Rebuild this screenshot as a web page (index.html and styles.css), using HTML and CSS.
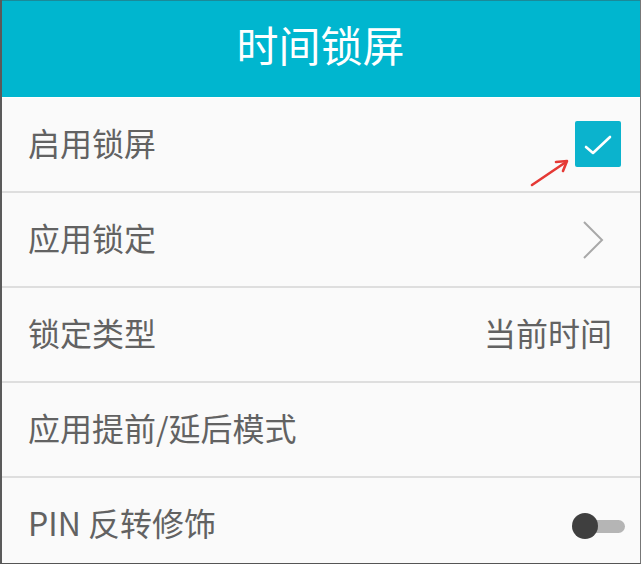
FILE: index.html
```html
<!DOCTYPE html>
<html lang="zh-CN">
<head>
    <meta charset="UTF-8">
    <meta name="viewport" content="width=device-width, initial-scale=1.0">
    <title>时间锁屏</title>
    <link rel="stylesheet" href="styles.css">
</head>
<body>
    <div class="screen">
        <div class="header">时间锁屏</div>
        <div class="list">
            <div class="row">
                <span class="label">启用锁屏</span>
                <span class="check">
                    <svg width="46" height="46" viewBox="0 0 46 46">
                        <polyline points="11,26 18,32 35,16" fill="none" stroke="#fff" stroke-width="2.6" stroke-linecap="round" stroke-linejoin="round"/>
                    </svg>
                </span>
                <svg class="arrow" width="44" height="32" viewBox="0 0 44 32">
                    <line x1="3" y1="28" x2="37" y2="5" stroke="#e53935" stroke-width="2.6" stroke-linecap="round"/>
                    <polyline points="27,5 38,4 34,14" fill="none" stroke="#e53935" stroke-width="2.6" stroke-linecap="round" stroke-linejoin="round"/>
                </svg>
            </div>
            <div class="row">
                <span class="label">应用锁定</span>
                <svg class="chevron" width="22" height="40" viewBox="0 0 22 40">
                    <polyline points="2,2 20,20 2,38" fill="none" stroke="#a8a8a8" stroke-width="2"/>
                </svg>
            </div>
            <div class="row">
                <span class="label">锁定类型</span>
                <span class="value">当前时间</span>
            </div>
            <div class="row">
                <span class="label">应用提前/延后模式</span>
            </div>
            <div class="row last">
                <span class="label">PIN 反转修饰</span>
                <span class="switch"><span class="knob"></span></span>
            </div>
        </div>
    </div>
</body>
</html>
```

FILE: styles.css
```css
html, body {margin:0; padding:0;}
body {background:#fafafa; font-family:"Noto Sans CJK SC", "Noto Sans", sans-serif;}
.screen {width:641px; height:564px; box-sizing:border-box; border-left:2px solid #5a5a5a; border-right:1px solid #777; border-bottom:1px solid #555; overflow:hidden;}
.header {height:98px; box-sizing:border-box; border-top:1px solid #1a8a99; background:#00b6cf; color:#fff; font-size:42px; line-height:86px; text-align:center; margin-left:-2px; margin-right:-1px; border-bottom:1px solid #fff;}
.row {position:relative; height:93px; border-bottom:2px solid #dedede; display:flex; align-items:center; justify-content:space-between; padding:0 28px 0 26px;}
.row.last {border-bottom:none;}
.label {font-size:32px; color:#626262; line-height:1; margin-top:-5px;}
.value {font-size:32px; color:#626262; line-height:1; margin-top:-5px;}
.check {width:46px; height:46px; background:#0bb3cd; border-radius:2px; display:block; margin-right:-9px; margin-top:-1px;}
.check svg {display:block;}
.arrow {position:absolute; left:527px; top:59px;}
.chevron {display:block; margin-right:8px;}
.switch {position:relative; width:40px; height:13px; background:#b5b5b5; border-radius:7px; margin-right:-13px; margin-top:3px;}
.knob {position:absolute; left:-13px; top:-7px; width:26px; height:26px; border-radius:50%; background:#3f3f3f;}
```
